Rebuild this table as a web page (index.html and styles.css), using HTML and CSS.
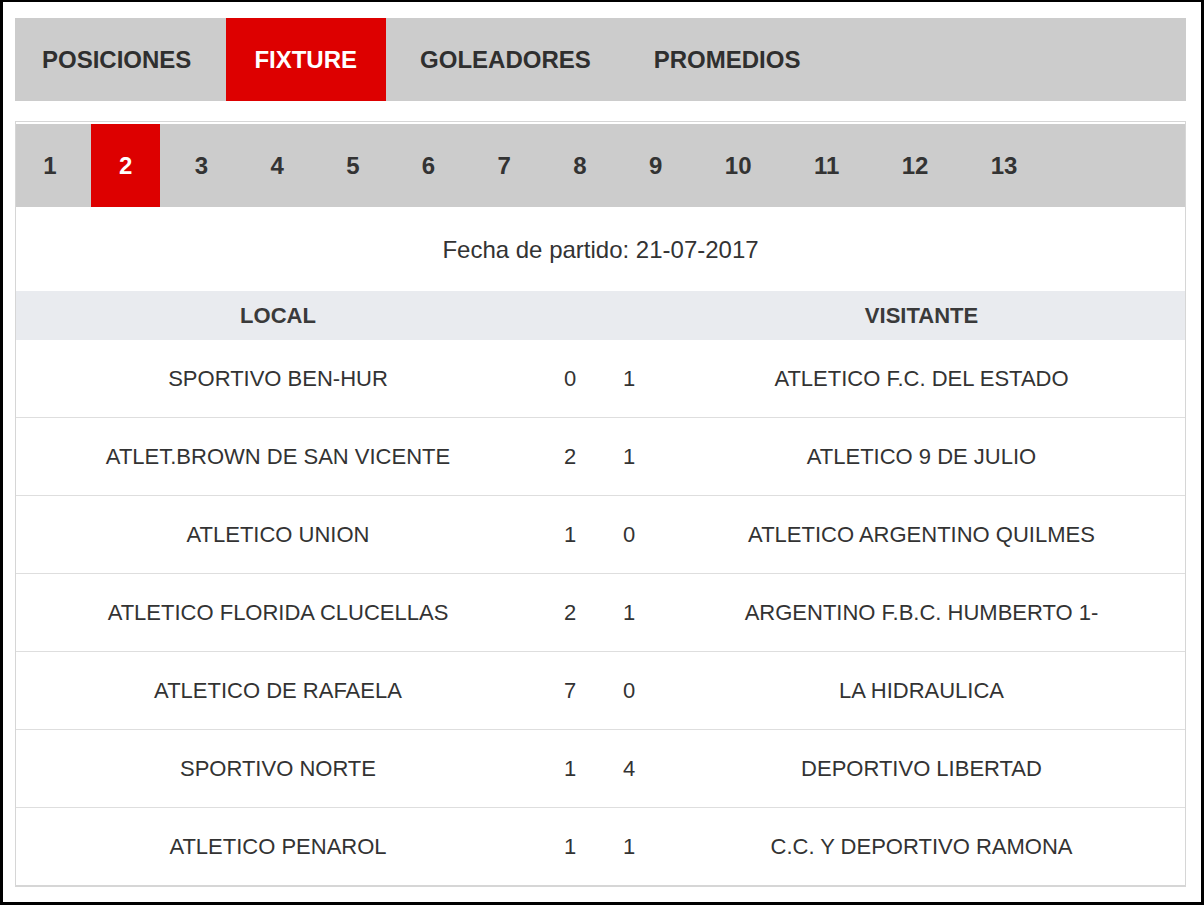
FILE: index.html
```html
<!DOCTYPE html>
<html lang="es">
<head>
<meta charset="utf-8">
<title>Fixture</title>
<link rel="stylesheet" href="styles.css">
</head>
<body>
<div class="frame">
  <div class="content">
    <nav class="tabs">
      <a class="tab">POSICIONES</a>
      <a class="tab active">FIXTURE</a>
      <a class="tab">GOLEADORES</a>
      <a class="tab">PROMEDIOS</a>
    </nav>
    <section class="box">
      <nav class="rounds">
        <a class="round">1</a>
        <a class="round active">2</a>
        <a class="round">3</a>
        <a class="round">4</a>
        <a class="round">5</a>
        <a class="round">6</a>
        <a class="round">7</a>
        <a class="round">8</a>
        <a class="round">9</a>
        <a class="round">10</a>
        <a class="round">11</a>
        <a class="round">12</a>
        <a class="round">13</a>
      </nav>
      <div class="fecha">Fecha de partido: 21-07-2017</div>
      <table class="fixture">
        <colgroup>
          <col class="c-local">
          <col class="c-score">
          <col class="c-score2">
          <col class="c-visit">
        </colgroup>
        <thead>
          <tr><th>LOCAL</th><th></th><th></th><th>VISITANTE</th></tr>
        </thead>
        <tbody>
          <tr><td>SPORTIVO BEN-HUR</td><td>0</td><td>1</td><td>ATLETICO F.C. DEL ESTADO</td></tr>
          <tr><td>ATLET.BROWN DE SAN VICENTE</td><td>2</td><td>1</td><td>ATLETICO 9 DE JULIO</td></tr>
          <tr><td>ATLETICO UNION</td><td>1</td><td>0</td><td>ATLETICO ARGENTINO QUILMES</td></tr>
          <tr><td>ATLETICO FLORIDA CLUCELLAS</td><td>2</td><td>1</td><td>ARGENTINO F.B.C. HUMBERTO 1-</td></tr>
          <tr><td>ATLETICO DE RAFAELA</td><td>7</td><td>0</td><td>LA HIDRAULICA</td></tr>
          <tr><td>SPORTIVO NORTE</td><td>1</td><td>4</td><td>DEPORTIVO LIBERTAD</td></tr>
          <tr><td>ATLETICO PENAROL</td><td>1</td><td>1</td><td>C.C. Y DEPORTIVO RAMONA</td></tr>
        </tbody>
      </table>
    </section>
  </div>
</div>
</body>
</html>
```

FILE: styles.css
```css
html, body {
  margin: 0;
  padding: 0;
  background: #fff;
}

body {
  font-family: "Liberation Sans", Arial, sans-serif;
  color: #333;
}

.frame {
  box-sizing: border-box;
  width: 1204px;
  height: 905px;
  border-style: solid;
  border-color: #000;
  border-width: 2px 3px 3px 3px;
  overflow: hidden;
}

.content {
  padding: 16px 15px 0 12px;
}

.tabs {
  display: flex;
  gap: 6px;
  height: 83px;
  background: #cccccc;
}

.tab {
  display: block;
  padding: 0 28.5px;
  line-height: 83px;
  font-size: 24px;
  font-weight: bold;
  color: #2f2f2f;
}

.tab:first-child {
  margin-left: -1.5px;
}

.tab.active {
  background: #dd0000;
  color: #fff;
}

.box {
  margin-top: 20px;
  border: 1px solid #d6d6d6;
  border-bottom-width: 2px;
  background: #fff;
}

.rounds {
  display: flex;
  gap: 6px;
  height: 83px;
  margin-top: 2px;
  background: #cccccc;
}

.round {
  display: block;
  padding: 0 28.2px;
  line-height: 83px;
  font-size: 24px;
  font-weight: bold;
  color: #333;
}

.round:first-child {
  margin-left: -1px;
}

.round.active {
  background: #dd0000;
  color: #fff;
}

.fecha {
  height: 84px;
  display: flex;
  align-items: center;
  justify-content: center;
  font-size: 24px;
  color: #333;
  padding-top: 2px;
  box-sizing: border-box;
}

.fixture {
  width: 100%;
  border-collapse: collapse;
  table-layout: fixed;
}

.c-local { width: 524px; }
.c-score { width: 60px; }
.c-score2 { width: 58px; }

.fixture th {
  height: 49px;
  padding: 0;
  background: #e9ebef;
  font-size: 22px;
  font-weight: bold;
  color: #3a3a3a;
  text-align: center;
  vertical-align: middle;
}

.fixture td {
  height: 77px;
  padding: 0;
  border-bottom: 1px solid #dedede;
  font-size: 22px;
  color: #333;
  text-align: center;
  vertical-align: middle;
}

.fixture tbody tr:last-child td {
  border-bottom: none;
}
```
